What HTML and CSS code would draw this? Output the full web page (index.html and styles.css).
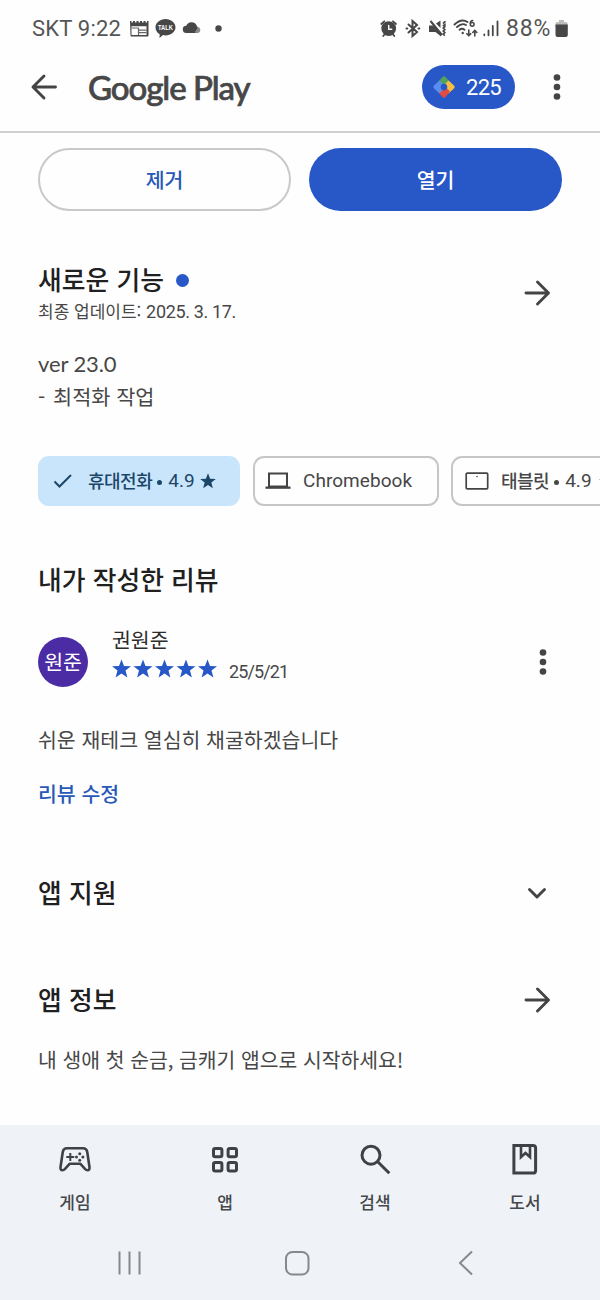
FILE: index.html
```
<!DOCTYPE html>
<html lang="ko">
<head>
<meta charset="utf-8">
<title>Google Play</title>
<link rel="stylesheet" href="styles.css">
</head>
<body>
<div class="screen">
  <header class="top">
    <div class="status">
      <span class="status-text clock">SKT 9:22</span>
      <svg class="status-left" width="100" height="24" viewBox="128 16 100 24">
        <path fill="#474747" fill-rule="evenodd" d="M130 21h1.500v1.500h1.500V21h2v1.500h1.500V21h2v1.500h1.500V21h2v1.500h1.500V21h2v1.500h1.500V21h1.500v14.500q0 1-1 1h-16q-1 0-1-1zM131.500 26.300v8.700h15v-8.700z"/>
        <path stroke="#666" stroke-width="1.200" fill="none" d="M138.500 28v7M138.500 30.200h8M138.500 32.600h8M131.700 28h7"/>
        <path fill="#474747" d="M165.500 19c5.500 0 10 3.700 10 8.200s-4.500 8.200-10 8.200q-1.300 0-2.500-.3l-3.500 3 .2-3.800c-2.600-1.500-4.200-4.100-4.200-7.100 0-4.500 4.500-8.200 10-8.200z"/>
        <text class="talk" x="165.500" y="30" text-anchor="middle" textLength="15" lengthAdjust="spacingAndGlyphs">TALK</text>
        <path fill="#8a8a8a" d="M192 33h5a3 3 0 0 0 .5-6l-4-1z"/>
        <path fill="#474747" d="M186.500 33a3.600 3.600 0 0 1-.2-7.200 5.600 5.600 0 0 1 10.300-.2c1.500 1.500.5 4.400-1.500 5.900l.5 1.500z"/>
        <circle cx="218.500" cy="28.500" r="3.200" fill="#474747"/>
      </svg>
      <svg class="status-right" width="122" height="26" viewBox="378 16 122 26">
        <g stroke="#474747" fill="none" stroke-width="1.800" stroke-linecap="round">
          <circle cx="388.700" cy="28.600" r="6.500" fill="#474747"/>
          <path d="M381.300 24l3-2.700M396 24l-3-2.700M384.500 34.500l-1.300 1.500M393 34.500l1.300 1.500"/>
          <path stroke="#fff" stroke-width="1.400" d="M388.700 25.500v3.700h3"/>
          <path stroke-width="2" d="M408.500 24.500l8.500 7.500-4.500 4V21l4.500 4-8.500 7.500M406.500 28.500h.8M418.500 28.500h.8"/>
          <path stroke-width="1.700" d="M443.500 23l1.500-1.300M443.300 25.600l1.500-1 0 2-1.500 1.500 1.500 1.500-1.500 1.500 1.500 1.500-1.500 1.500 1 1"/>
          <path d="M454.500 24.500q7-6.500 13-2.500M457 27q5-4.500 9-2M459.500 29.700q2.500-2 5 0" stroke-width="1.900"/>
          <path stroke-width="1.600" d="M468.800 30v5.500M466.800 33.700l2 2 2-2M474.800 36v-5.500M472.800 32.500l2-2 2 2"/>
          <path stroke-width="1.500" d="M472.800 20.500q-2.500 0-2.500 3"/><circle cx="472.200" cy="24.300" r="1.900" stroke-width="1.500"/>
          <path d="M484.300 34.500v.8M488.500 30.500v4.800M492.800 26v9.300M497.500 21.500v13.800" stroke-width="1.800"/>
        </g>
        <circle cx="462.700" cy="33" r="1.200" fill="#474747"/>
        <path fill="#474747" d="M429 25.500h4.500l7.500 7.500V36.500l-5.500-4.500h-6.500zM436 23.500l4.500-3v7.500z"/>
        <path stroke="#474747" stroke-width="2" d="M430.500 21l11.500 14"/>
      </svg>
      <span class="status-text pct">88%</span>
      <svg class="battery" width="14" height="20" viewBox="0 0 14 20"><path fill="#bdbdbd" d="M4 1h5v2h2q1.500 0 1.500 1.500V8H.5V4.500Q.5 3 2 3h2z"/><path fill="#474747" d="M.5 5.500h12.300v10.500q0 2-2 2H2.500q-2 0-2-2z"/></svg>
    </div>
    <div class="appbar">
      <svg width="28" height="28" viewBox="0 0 28 28" class="line"><path d="M25.500 14H3M14 3L3 14l11 11"/></svg>
      <span class="logo">Google Play</span>
      <div class="points">
        <svg width="24" height="24" viewBox="0 0 24 24">
          <path fill="#4fa35c" d="M5.500 7.500L10.500 2q1.500-1.500 3 0l5 5.500-4 3.500-2.500-2.500L9.500 11z"/>
          <path fill="#f5bd42" d="M16.500 5.500L22 10.500q1.500 1.500 0 3l-5.500 5-3.500-4 2.500-2.500L13 9z"/>
          <path fill="#e14b40" d="M18 16.500l-4.500 5.500q-1.500 1.500-3 0l-5-5.500 4-3.500 2.500 2.500 2.500-2.500z"/>
          <path fill="#5a8df0" d="M7.500 18.500L2 13.500q-1.500-1.500 0-3l5.500-5L11 9l-2.500 3 2.500 2.500z"/>
          <circle cx="12" cy="12" r="3.200" fill="#2858c8"/>
        </svg>
        <span>225</span>
      </div>
      <svg class="kebab" width="8" height="28" viewBox="0 0 8 28"><circle cx="4" cy="4.500" r="3.300"/><circle cx="4" cy="14" r="3.300"/><circle cx="4" cy="23.500" r="3.300"/></svg>
    </div>
  </header>

  <main>
    <div class="actions">
      <button class="btn outline">제거</button>
      <button class="btn filled">열기</button>
    </div>

    <section class="news">
      <div class="news-head">
        <div>
          <h2>새로운 기능<i class="dot"></i></h2>
          <p class="updated">최종 업데이트: <span class="date">2025. 3. 17.</span></p>
        </div>
        <svg width="28" height="28" viewBox="0 0 28 28" class="line"><path d="M3 14h22M14.500 3l11 11-11 11"/></svg>
      </div>
      <p class="body"><span class="ver">ver 23.0</span><br><span class="dash">-</span>최적화 작업</p>
    </section>

    <div class="chips">
      <div class="chip selected">
        <svg width="20" height="16" viewBox="0 0 20 16" fill="none" stroke="#1c4668" stroke-width="2"><path d="M1.500 8.500l5 5L18 2"/></svg>
        <span class="label phone">휴대전화<b></b><em>4.9</em></span>
        <svg class="star" width="16" height="16" viewBox="0 0 24 24" fill="#1c4668"><path d="M12 .5l3.200 8.100 8.500.4-6.700 5.300 2.300 8.500-7.300-4.800-7.300 4.800L7 14.300.3 9l8.500-.4z"/></svg>
      </div>
      <div class="chip book">
        <svg width="26" height="20" viewBox="0 0 26 20"><path fill="none" stroke="#444" stroke-width="2" d="M4 2.500h18v13H4z"/><path fill="#444" d="M.5 15.500h25v2.300H.5z"/></svg>
        <span>Chromebook</span>
      </div>
      <div class="chip tablet">
        <svg width="24" height="18" viewBox="0 0 24 18"><rect x="1.200" y="1.200" width="21.500" height="15.600" rx="1" fill="none" stroke="#444" stroke-width="1.700"/><circle cx="12" cy="4.500" r=".8" fill="#444"/></svg>
        <span class="label">태블릿<b></b><em>4.9</em></span>
        <svg class="star" width="16" height="16" viewBox="0 0 24 24" fill="#444"><path d="M12 .5l3.200 8.100 8.500.4-6.700 5.300 2.300 8.500-7.300-4.800-7.300 4.800L7 14.300.3 9l8.500-.4z"/></svg>
      </div>
    </div>

    <section class="review">
      <h2>내가 작성한 리뷰</h2>
      <div class="reviewer">
        <div class="avatar">원준</div>
        <div class="who">
          <div class="name">권원준</div>
          <div class="rating">
            <svg width="106" height="20" viewBox="0 0 106 20" fill="#2858c8">
              <defs><path id="s" d="M9.500.6l2.500 6.300 7 .3-5.500 4.400 1.900 6.900-5.900-3.900-5.900 3.900 1.900-6.900L0 7.200l7-.3z"/></defs>
              <use href="#s"/><use href="#s" x="21.500"/><use href="#s" x="43"/><use href="#s" x="64.500"/><use href="#s" x="86"/>
            </svg>
            <span>25/5/21</span>
          </div>
        </div>
        <svg class="kebab" width="8" height="28" viewBox="0 0 8 28"><circle cx="4" cy="4.500" r="3.300"/><circle cx="4" cy="14" r="3.300"/><circle cx="4" cy="23.500" r="3.300"/></svg>
      </div>
      <p class="comment">쉬운 재테크 열심히 채굴하겠습니다</p>
      <a class="edit">리뷰 수정</a>
    </section>

    <section class="row support">
      <h2>앱 지원</h2>
      <svg width="28" height="28" viewBox="0 0 28 28" class="line"><path d="M6.500 11.500l7.500 7.500 7.500-7.500"/></svg>
    </section>
    <section class="row info">
      <h2>앱 정보</h2>
      <svg width="28" height="28" viewBox="0 0 28 28" class="line"><path d="M3 15h22M14.500 4l11 11-11 11"/></svg>
    </section>
    <p class="intro">내 생애 첫 순금, 금캐기 앱으로 시작하세요!</p>
  </main>

  <footer>
    <nav class="tabs">
      <div class="tab">
        <svg width="36" height="36" viewBox="0 0 36 36" fill="none" stroke="#3f4245" stroke-width="2.600" stroke-linejoin="round"><path d="M10 6.200h16q3.500 0 4.200 3.500l2.300 15.500q.3 3-2 3-1.300 0-2.300-1l-5-5.500H12.800L7.800 27.200q-1 1-2.300 1-2.300 0-2-3L5.800 9.700Q6.500 6.200 10 6.200z"/><path stroke-width="2" d="M9.300 15h8M13.300 11v8"/><g fill="#3f4245" stroke="none"><circle cx="22.700" cy="11.800" r="1.500"/><circle cx="22.700" cy="18.200" r="1.500"/><circle cx="19.500" cy="15" r="1.500"/><circle cx="25.900" cy="15" r="1.500"/></g></svg>
        <span>게임</span>
      </div>
      <div class="tab">
        <svg width="36" height="36" viewBox="0 0 36 36" fill="none" stroke="#3f4245" stroke-width="3"><rect x="6.500" y="6.400" width="8.400" height="8.400" rx="1.800"/><rect x="21.100" y="6.400" width="8.400" height="8.400" rx="1.800"/><rect x="6.500" y="20.600" width="8.400" height="8.400" rx="1.800"/><rect x="21.100" y="20.600" width="8.400" height="8.400" rx="1.800"/></svg>
        <span>앱</span>
      </div>
      <div class="tab">
        <svg width="36" height="36" viewBox="0 0 36 36" fill="none" stroke="#3f4245" stroke-width="3"><circle cx="14" cy="13.200" r="9"/><path d="M20.500 19.500L32.300 31.300"/></svg>
        <span>검색</span>
      </div>
      <div class="tab">
        <svg width="36" height="36" viewBox="0 0 36 36" fill="none" stroke="#3f4245" stroke-width="3"><path d="M6.900 3.400h19q2.700 0 2.700 2.700v22.300q0 2.700-2.700 2.700h-19z"/><path stroke-width="2.600" d="M14 3.500V15l4.500-4 4.500 4V3.500"/></svg>
        <span>도서</span>
      </div>
    </nav>
    <svg class="system" width="600" height="30" viewBox="0 0 600 30" fill="none" stroke="#85888c" stroke-width="2"><path stroke-width="2" d="M119.500 3.500v23M129.500 3.500v23M139.500 3.500v23"/><rect x="286" y="4" width="22.500" height="22.500" rx="6.500"/><path d="M472 3.500L460 15l12 11.500"/></svg>
  </footer>
</div>
</body>
</html>
```
FILE: styles.css
```
* { box-sizing: border-box; }
body { margin: 0; background: #fefefe; font-family: Roboto, "Noto Sans CJK KR", sans-serif; color: #474747; }
h2, p { margin: 0; }
svg { display: block; flex: none; }
.screen { width: 600px; height: 1300px; overflow: hidden; display: flex; flex-direction: column; }

.top { height: 133px; border-bottom: 2px solid #cfcfcf; flex: none; }
.status { height: 56px; padding-left: 32px; display: flex; align-items: center; }
.status-text { font-size: 22px; line-height: 24px; white-space: nowrap; color: #555; padding-top: 2px; }
.clock { width: 96px; letter-spacing: 0.2px; }
.status-right { margin-left: 150px; margin-top: 2px; }
.pct { width: 49px; margin-left: 6px; font-size: 23px; letter-spacing: 0.8px; }
.battery { margin-top: 2px; }
.talk { font: bold 7px "Liberation Sans", sans-serif; fill: #fff; }
.line { fill: none; stroke: #444; stroke-width: 2.9; stroke-linecap: round; stroke-linejoin: round; }
.kebab { fill: #444; }

.appbar { height: 63px; padding: 0 39px 1px 30px; display: flex; align-items: center; }
.logo { width: 334px; padding-left: 30px; font: 500 33px/40px Lato, sans-serif; letter-spacing: -1.05px; -webkit-text-stroke: 0.7px #474747; white-space: nowrap; }
.points { width: 93px; height: 44px; margin-left: 30px; padding-left: 10px; border-radius: 22px; background: #2858c8; color: #fff; display: flex; align-items: center; gap: 10px; font-size: 22px; letter-spacing: -0.7px; }
.appbar .kebab { margin-left: auto; }

.actions { display: grid; grid-template-columns: 253px 253px; gap: 18px; padding: 15px 38px 0; }
.btn { height: 63px; border-radius: 32px; padding: 0 0 2px; font: 500 20.500px/28px "Noto Sans CJK KR", sans-serif; }
.outline { background: transparent; border: 2px solid #c9c9c9; color: #2858b8; }
.filled { background: #2858c8; border: 0; color: #fff; }

h2 { font: 500 25.800px/36px "Noto Sans CJK KR", sans-serif; color: #202020; white-space: nowrap; }
.news { height: 245px; padding: 50px 49px 0 38px; }
.news-head { display: flex; justify-content: space-between; }
.news-head .line { margin-top: 18px; }
.dot { display: inline-block; width: 13px; height: 13px; border-radius: 50%; background: #2858c8; margin-left: 12px; vertical-align: 3px; }
.updated { font: 17px/28px "Noto Sans CJK KR", sans-serif; white-space: nowrap; }
.date { font-family: Roboto, sans-serif; font-size: 18px; letter-spacing: -0.35px; }
.body { font: 20.800px/32px "Noto Sans CJK KR", sans-serif; margin-top: 21px; white-space: nowrap; }
.ver { font-family: Lato, sans-serif; font-size: 22px; letter-spacing: -0.1px; }
.dash { display: inline-block; width: 15px; }

.chips { display: flex; gap: 13px; padding-left: 38px; overflow: hidden; }
.chip { flex: none; height: 50px; border: 2px solid #c6c6c6; border-radius: 11px; display: flex; align-items: center; font-size: 19px; line-height: 28px; white-space: nowrap; }
.label { display: flex; align-items: center; font: 500 18px/28px "Noto Sans CJK KR", sans-serif; letter-spacing: -0.5px; margin-top: -2px; }
.label b { width: 5px; height: 5px; border-radius: 50%; background: currentColor; margin: 4px 6px 0 5px; }
.label em { font: 400 19px/28px Roboto, sans-serif; letter-spacing: 0; margin-top: 2px; }
.selected { width: 202px; background: #c9e5fc; border-color: #c9e5fc; color: #1c4668; padding-left: 13px; }
.phone { width: 112px; margin-left: 15px; }
.book { width: 186px; padding-left: 10px; gap: 12px; letter-spacing: 0.05px; }
.tablet { width: 215px; padding-left: 12px; gap: 12px; margin-left: -1px; }
.tablet .star { margin-left: -5px; }

.review { padding: 55px 53px 0 38px; height: 303px; }
.reviewer { display: flex; margin-top: 29px; height: 60px; }
.avatar { width: 50px; height: 50px; margin-top: 11px; border-radius: 50%; background: #4b2ca5; color: #fff; font: 20.500px/49px "Noto Sans CJK KR", sans-serif; text-align: center; }
.who { margin-left: 24px; margin-top: -1px; }
.name { font: 20.500px/28px "Noto Sans CJK KR", sans-serif; color: #2c2c2c; }
.rating { display: flex; font-size: 18px; line-height: 24px; letter-spacing: -0.9px; }
.rating span { margin: 7px 0 0 11px; }
.rating svg { margin-top: 6px; }
.reviewer .kebab { margin-left: auto; margin-top: 22px; }
.comment { font: 20.500px/28px "Noto Sans CJK KR", sans-serif; margin-top: 39px; white-space: nowrap; }
.edit { display: block; font: 500 20.500px/28px "Noto Sans CJK KR", sans-serif; color: #2858b8; margin-top: 26px; }

.row { display: flex; justify-content: space-between; align-items: center; padding: 0 49px 0 38px; height: 36px; }
.support { margin-top: 65px; }
.info { margin-top: 71px; }
.intro { font: 20.400px/28px "Noto Sans CJK KR", sans-serif; padding-left: 38px; margin-top: 28px; white-space: nowrap; }

footer { margin-top: auto; height: 175px; background: #eff3f8; flex: none; }
.tabs { display: grid; grid-template-columns: repeat(4, 1fr); padding-top: 17px; }
.tab { display: flex; flex-direction: column; align-items: center; font: 500 17px/26px "Noto Sans CJK KR", sans-serif; color: #45484b; gap: 11px; }
.system { margin-top: 33px; }
```
